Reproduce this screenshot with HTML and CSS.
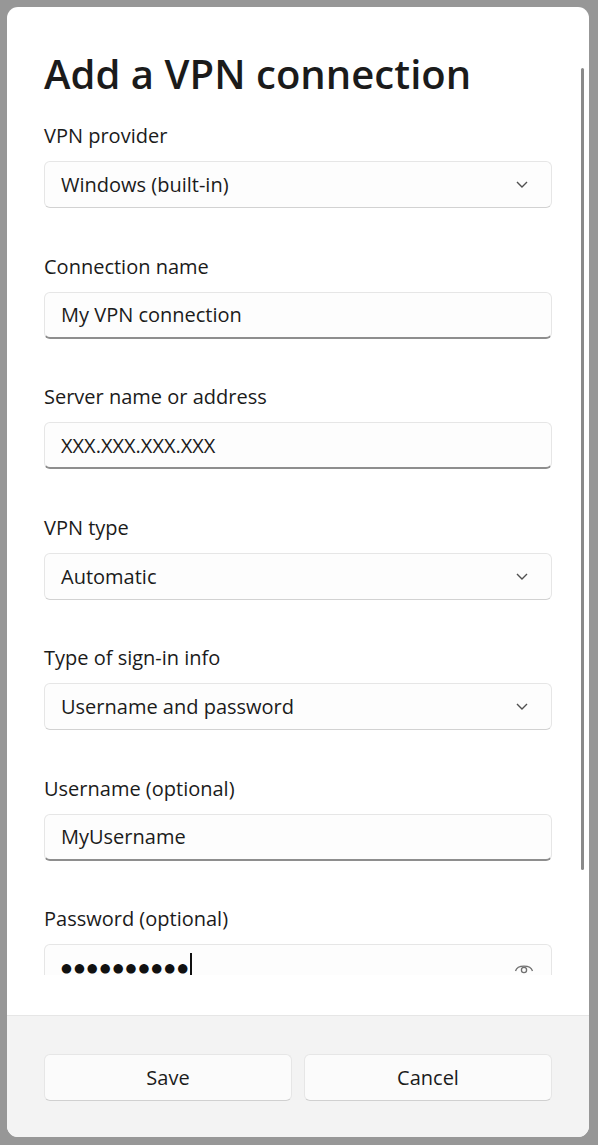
FILE: index.html
```html
<!DOCTYPE html>
<html lang="en">
<head>
<meta charset="utf-8">
<title>Add a VPN connection</title>
<link rel="stylesheet" href="styles.css">
</head>
<body>
<div class="dialog">
  <div class="body">
    <div class="scroll">
      <h1 class="title">Add a VPN connection</h1>
      <div class="fields">
        <div class="field">
          <div class="label">VPN provider</div>
          <div class="control select"><span class="value">Windows (built-in)</span>
            <svg class="chev" viewBox="0 0 12 7" width="12" height="7"><path d="M1 1 L6 6 L11 1"/></svg></div>
        </div>
        <div class="field">
          <div class="label">Connection name</div>
          <div class="control text"><span class="value">My VPN connection</span></div>
        </div>
        <div class="field">
          <div class="label">Server name or address</div>
          <div class="control text"><span class="value">XXX.XXX.XXX.XXX</span></div>
        </div>
        <div class="field">
          <div class="label">VPN type</div>
          <div class="control select"><span class="value">Automatic</span>
            <svg class="chev" viewBox="0 0 12 7" width="12" height="7"><path d="M1 1 L6 6 L11 1"/></svg></div>
        </div>
        <div class="field">
          <div class="label">Type of sign-in info</div>
          <div class="control select"><span class="value">Username and password</span>
            <svg class="chev" viewBox="0 0 12 7" width="12" height="7"><path d="M1 1 L6 6 L11 1"/></svg></div>
        </div>
        <div class="field">
          <div class="label">Username (optional)</div>
          <div class="control text"><span class="value">MyUsername</span></div>
        </div>
        <div class="field">
          <div class="label">Password (optional)</div>
          <div class="control text password"><span class="dots">●●●●●●●●●●</span><span class="caret"></span>
            <svg class="eye" viewBox="0 0 20 14" width="20" height="14"><path d="M1.5 11 C3.5 4.5 16.5 4.5 18.5 11"/><circle cx="10" cy="10" r="2.6"/></svg></div>
        </div>
      </div>
    </div>
    <div class="scrollbar"></div>
  </div>
  <div class="footer">
    <button class="btn">Save</button>
    <button class="btn">Cancel</button>
  </div>
</div>
</body>
</html>
```
FILE: styles.css
```css
html, body {
  margin: 0;
  padding: 0;
}
body {
  background: #979797;
  padding: 7px 9px 8px 7px;
  font-family: "Open Sans", "Noto Sans", sans-serif;
  color: #1b1b1b;
}
.dialog {
  width: 582px;
  height: 1130px;
  background: #ffffff;
  border-radius: 11px;
  overflow: hidden;
  display: flex;
  flex-direction: column;
}
.body {
  position: relative;
  flex: 1;
  min-height: 0;
  padding-bottom: 40px;
  display: flex;
  flex-direction: column;
}
.scroll {
  flex: 1;
  min-height: 0;
  overflow: hidden;
  padding: 0 37px;
}
.title {
  margin: 0;
  padding-top: 40px;
  font-size: 40px;
  font-weight: 600;
  line-height: 54px;
  letter-spacing: 0.05px;
  color: #1b1b1b;
}
.fields {
  margin-top: 20px;
  display: flex;
  flex-direction: column;
  gap: 43.5px;
}
.label {
  font-size: 20px;
  line-height: 30px;
  margin-bottom: 10px;
}
.control {
  box-sizing: border-box;
  height: 47px;
  border: 1px solid #e6e6e6;
  border-radius: 6px;
  background: #fdfdfd;
  display: flex;
  align-items: center;
  padding: 0 23px 0 16px;
  font-size: 20px;
  color: #1b1b1b;
}
.value { flex: 1; }
.select {
  border-bottom-color: #d2d2d2;
}
.text {
  border-bottom: 2px solid #8e8e8e;
}
.chev {
  fill: none;
  stroke: #505050;
  stroke-width: 1.4;
}
.password { align-items: flex-start; }
.dots {
  flex: none;
  font-family: "DejaVu Sans", sans-serif;
  font-size: 12.5px;
  letter-spacing: 2px;
  line-height: 14px;
  margin-top: 16px;
  color: #111;
}
.caret {
  flex: none;
  width: 2px;
  height: 28px;
  background: #111;
  margin-top: 8px;
  margin-left: 0;
}
.eye {
  margin-left: auto;
  margin-top: 15px;
  margin-right: -6px;
  fill: none;
  stroke: #707070;
  stroke-width: 1.3;
}
.scrollbar {
  position: absolute;
  right: 5px;
  top: 61px;
  width: 3px;
  height: 802px;
  border-radius: 2px;
  background: #8a8a8a;
}
.footer {
  box-sizing: border-box;
  height: 122px;
  flex: none;
  background: #f3f3f3;
  border-top: 1px solid #e6e6e6;
  padding: 38px 37px 0 37px;
  display: grid;
  grid-template-columns: 1fr 1fr;
  column-gap: 12px;
  align-items: start;
}
.btn {
  height: 47px;
  border: 1px solid #e6e6e6;
  border-bottom-color: #d0d0d0;
  border-radius: 6px;
  background: #fbfbfb;
  font-family: inherit;
  font-size: 20px;
  color: #1b1b1b;
}
```
